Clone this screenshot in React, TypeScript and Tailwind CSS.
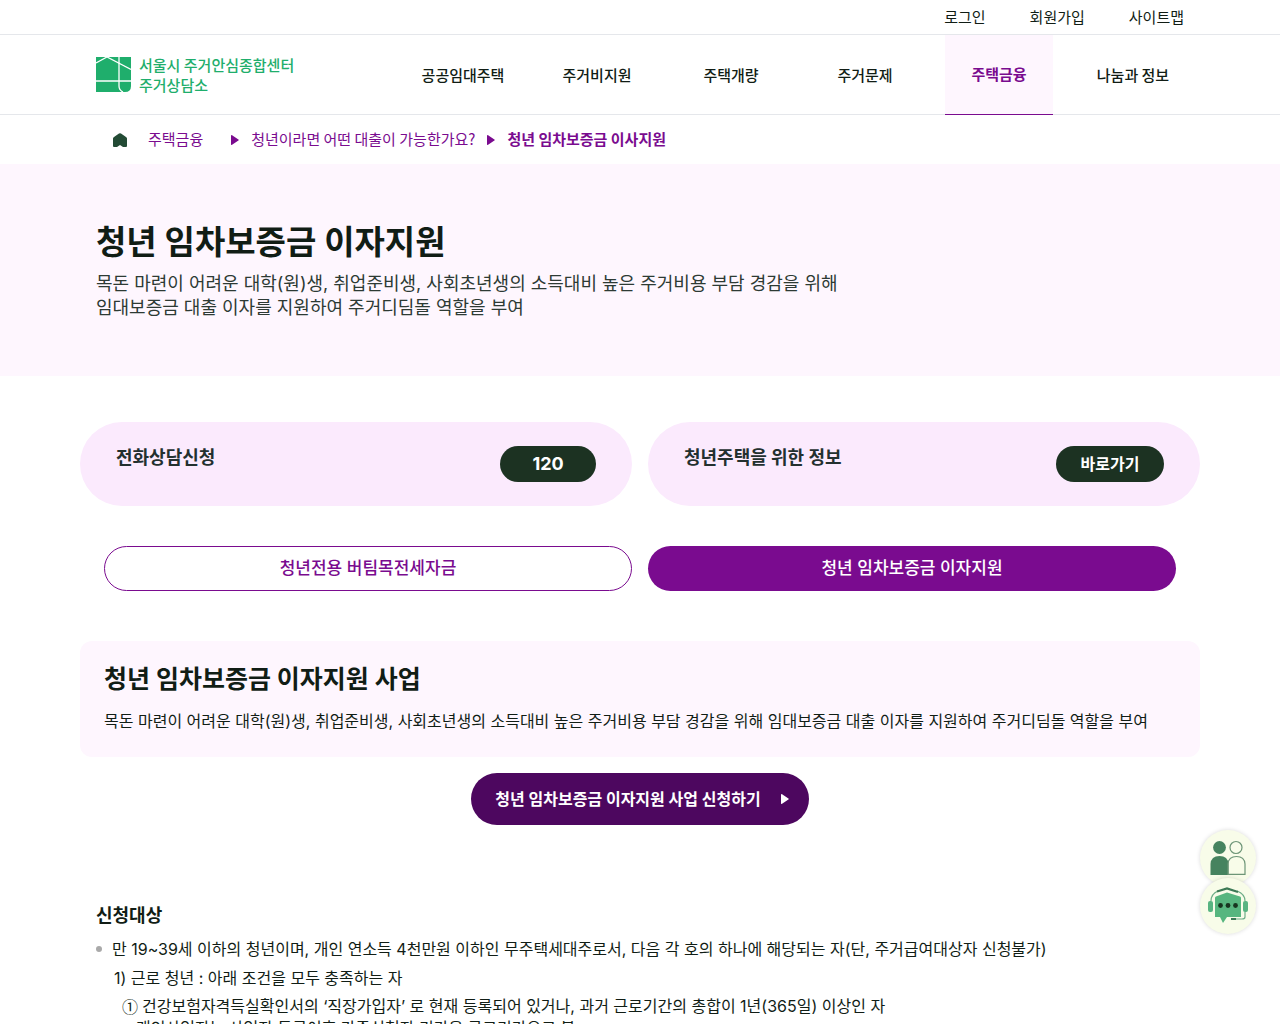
const NAV = ['공공임대주택', '주거비지원', '주택개량', '주거문제', '주택금융', '나눔과 정보']
const ACTIVE = '주택금융'

const UTIL_LINKS = ['로그인', '회원가입', '사이트맵']

function Logo() {
  return (
    <a href="#" className="flex items-center gap-2 text-[15px] font-medium leading-5 text-[#1fae6c]">
      <svg width="35" height="35" viewBox="0 0 35 35" aria-hidden="true">
        <path fill="#1fae6c" d="M0 0H35V29Q35 35 29 35H0Z" />
        <g fill="none" stroke="#fff" strokeWidth="1.3">
          <path d="M0 6 L11 0 L35 12.500" />
          <path d="M23 0V29Q23 33 27 35" />
          <path d="M0 24H35" />
        </g>
      </svg>
      <span>
        서울시 주거안심종합센터
        <br />
        주거상담소
      </span>
    </a>
  )
}

function Arrow() {
  return (
    <svg width="8" height="10" viewBox="0 0 8 10" fill="currentColor" aria-hidden="true">
      <path d="M0 .8Q0-.4 1.1.3L7.4 4.4Q8.2 5 7.4 5.6L1.1 9.7Q0 10.4 0 9.2Z" />
    </svg>
  )
}

function PeopleIcon() {
  return (
    <svg width="36" height="36" viewBox="0 0 36 36" aria-hidden="true">
      <circle cx="9.5" cy="7.500" r="6.4" fill="#46835f" />
      <path d="M.5 35V24Q1 16 9.500 16Q18 16 18.500 24V35Z" fill="#46835f" />
      <g fill="none" stroke="#6d9577" strokeWidth="1.2">
        <circle cx="26" cy="7.500" r="6" />
        <path d="M18 34.400V24Q18.500 16.500 26.500 16.500Q34.500 16.500 35 24V34.400Z" />
      </g>
    </svg>
  )
}

function ChatIcon() {
  return (
    <svg width="42" height="38" viewBox="0 0 42 38" aria-hidden="true">
      <path d="M8 11Q8 10 9 9.600L20 5.500L33 9.600Q34 10 34 11V30H20L16 36L13 30H8Z" fill="#57b67f" />
      <rect x="1" y="14" width="5" height="11" rx="2" fill="#58b481" />
      <rect x="36" y="14" width="5" height="11" rx="2" fill="#58b481" />
      <g fill="none" stroke="#6fae88" strokeWidth="1.2">
        <path d="M4 14Q4 7 11 4M30 4Q38 7 38 14M38 25V30Q38 32 35 32H27" />
      </g>
      <path d="M10 4.500L20 1.500L31 5" fill="none" stroke="#3d7a56" strokeWidth="2.200" />
      <path d="M24 32H29" stroke="#3d7a56" strokeWidth="2" />
      <circle cx="13.500" cy="18.500" r="2.400" fill="#17351f" />
      <circle cx="21" cy="18.500" r="2.400" fill="#17351f" />
      <circle cx="28.500" cy="18.500" r="2.400" fill="#17351f" />
    </svg>
  )
}

export default function App() {
  return (
    <div className="bg-white font-['Inter','Noto_Sans_CJK_KR',sans-serif] text-[#111d15] break-keep">
      <header className="font-['Noto_Sans_CJK_KR',sans-serif]">
        <div className="border-b border-gray-200">
          <div className="mx-auto flex h-[34px] max-w-[1088px] items-center justify-end gap-11 text-[15px]">
            {UTIL_LINKS.map((label) => (
              <a key={label} href="#">{label}</a>
            ))}
          </div>
        </div>
        <div className="border-b border-gray-200">
          <div className="mx-auto flex h-[79px] max-w-[1120px] items-center justify-between pl-4">
            <Logo />
            <nav className="-mb-px flex h-20 w-[804px] text-[15px] font-medium">
              {NAV.map((label) => (
                <a
                  key={label}
                  href="#"
                  className={
                    label === ACTIVE
                      ? 'mx-[13px] flex flex-1 items-center justify-center border-b border-[#7a0b8f] bg-[#fef6fe] font-bold text-[#7a0b8f]'
                      : 'mx-[13px] flex flex-1 items-center justify-center'
                  }
                >
                  {label}
                </a>
              ))}
            </nav>
          </div>
        </div>
      </header>

      <nav
        aria-label="breadcrumb"
        className="mx-auto flex h-[49px] max-w-[1056px] items-center gap-3 font-['Noto_Sans_CJK_KR',sans-serif] text-[15px] text-[#7a0b8f]"
      >
        <a href="#" aria-label="홈" className="mr-2">
          <svg width="16" height="14" viewBox="0 0 16 14" aria-hidden="true">
            <path fill="#234b35" d="M1 5.500Q1 4.500 2 3.900L7 .5Q8 0 9 .5L14 3.900Q15 4.500 15 5.500V13Q15 14 14 14H11L8 12L5 14H2Q1 14 1 13Z" />
          </svg>
        </a>
        <a href="#" className="mr-4">주택금융</a>
        <Arrow />
        <a href="#">청년이라면 어떤 대출이 가능한가요?</a>
        <Arrow />
        <a href="#" className="font-bold">청년 임차보증금 이사지원</a>
      </nav>

      <section className="bg-[#fef6fe]">
        <div className="mx-auto max-w-[1088px] pt-13 pb-14">
          <h1 className="text-[33px] leading-[52px] font-bold">청년 임차보증금 이자지원</h1>
          <p className="mt-1 text-lg leading-6 text-[#2d3a34]">
            목돈 마련이 어려운 대학(원)생, 취업준비생, 사회초년생의 소득대비 높은 주거비용 부담 경감을 위해
            <br />
            임대보증금 대출 이자를 지원하여 주거디딤돌 역할을 부여
          </p>
        </div>
      </section>

      <main className="mx-auto max-w-[1120px] pt-[46px]">
        <div className="grid grid-cols-2 gap-4 text-lg font-bold">
          <div className="flex items-start justify-between rounded-full bg-[#fbeafd] px-9 py-6">
            <h2 className="leading-6 text-[#23302f]">전화상담신청</h2>
            <a href="tel:120" className="flex h-9 w-24 items-center justify-center rounded-full bg-[#1c3222] text-white">
              120
            </a>
          </div>
          <div className="flex items-start justify-between rounded-full bg-[#fbeafd] px-9 py-6">
            <h2 className="leading-6 text-[#23302f]">청년주택을 위한 정보</h2>
            <a href="#" className="flex h-9 w-[108px] items-center justify-center rounded-full bg-[#1c3222] text-base text-white">
              바로가기
            </a>
          </div>
        </div>

        <div className="mt-10 grid grid-cols-2 gap-4 px-6 text-[17px] font-medium">
          <button type="button" className="h-[45px] rounded-full border border-[#7a0b8f] text-[#7a0b8f]">
            청년전용 버팀목전세자금
          </button>
          <button type="button" className="h-[45px] rounded-full bg-[#7a0b8f] text-white">
            청년 임차보증금 이자지원
          </button>
        </div>

        <section className="mt-[50px] rounded-xl bg-[#fef6fe] px-6 pt-4 pb-5">
          <h2 className="text-[25px] leading-[44px] font-bold">청년 임차보증금 이자지원 사업</h2>
          <p className="mt-1 text-base leading-8">
            목돈 마련이 어려운 대학(원)생, 취업준비생, 사회초년생의 소득대비 높은 주거비용 부담 경감을 위해 임대보증금 대출 이자를 지원하여 주거디딤돌 역할을 부여
          </p>
        </section>

        <div className="mt-4 flex justify-center">
          <a href="#" className="flex h-[52px] items-center gap-5 rounded-full bg-[#4d075f] pr-5 pl-6 text-base font-bold text-white">
            청년 임차보증금 이자지원 사업 신청하기
            <Arrow />
          </a>
        </div>

        <section className="mt-[77px] px-4">
          <h3 className="text-lg leading-7 font-bold">신청대상</h3>
          <ul className="mt-1 text-base">
            <li className="flex leading-[30px]">
              <span className="mt-3 mr-[10px] h-[6px] w-[6px] shrink-0 rounded-full bg-[#a9a9a9]" />
              만 19~39세 이하의 청년이며, 개인 연소득 4천만원 이하인 무주택세대주로서, 다음 각 호의 하나에 해당되는 자(단, 주거급여대상자 신청불가)
            </li>
            <li className="pl-[18px] leading-7">1) 근로 청년 : 아래 조건을 모두 충족하는 자</li>
            <li className="flex gap-1 pl-[26px] leading-7">
              <span className="font-['Noto_Sans_CJK_KR',sans-serif]">①</span>
              건강보험자격득실확인서의 ‘직장가입자’ 로 현재 등록되어 있거나, 과거 근로기간의 총합이 1년(365일) 이상인 자
            </li>
            <li className="pl-10 leading-4">개인사업자는 사업자 등록이후 간주신청자 기간을 근로기간으로 봄</li>
          </ul>
        </section>
      </main>

      <div className="fixed right-6 bottom-[90px] flex flex-col">
        <a href="#" aria-label="상담" className="flex h-14 w-14 items-center justify-center rounded-full bg-[#f8fce9] shadow-[0_0_4px_rgba(0,0,0,0.15)]">
          <PeopleIcon />
        </a>
        <a href="#" aria-label="챗봇" className="-mt-2 flex h-14 w-14 items-center justify-center rounded-full bg-[#f8fce9] shadow-[0_0_4px_rgba(0,0,0,0.15)]">
          <ChatIcon />
        </a>
      </div>
    </div>
  )
}
